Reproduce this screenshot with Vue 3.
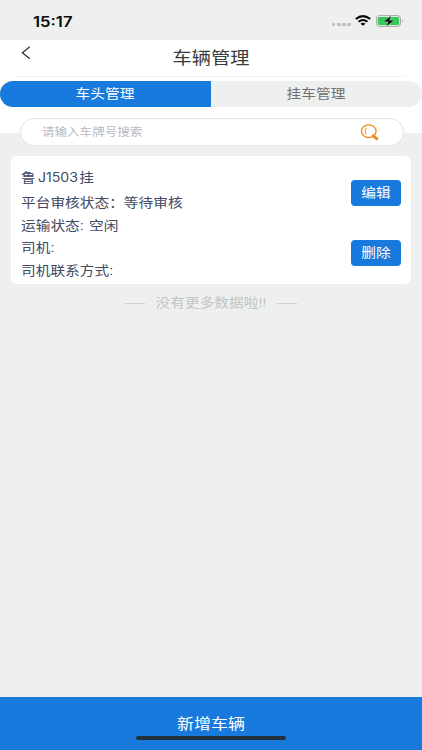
<script setup>
import { ref } from 'vue'

const tabs = ['车头管理', '挂车管理']
const active = ref(0)
const keyword = ref('')

const vehicles = ref([
  {
    prefix: '鲁',
    plate: 'J1503',
    suffix: '挂',
    audit: '等待审核',
    transport: '空闲',
    driver: '',
    phone: '',
  },
])
</script>

<template>
  <div class="page">
    <div class="status-bar">
      <span class="time wide">15:17</span>
      <div class="status-icons">
        <div class="signal"><i v-for="n in 4" :key="n" /></div>
        <svg class="wifi" width="16" height="11" viewBox="0 0 16 11">
          <g fill="none" stroke="#080808" stroke-width="2">
            <path d="M0.8 4 Q8 -1.8 15.2 4" />
            <path d="M3.5 6.8 Q8 3.1 12.5 6.8" />
          </g>
          <path d="M5.5 8.7 Q8 6.8 10.5 8.7 L8 10.8 Z" fill="#080808" />
        </svg>
        <svg class="battery" width="28" height="12" viewBox="0 0 28 12">
          <rect x="0.5" y="0.6" width="24" height="10.8" rx="2.8" fill="#e9f1ea" stroke="#a3a8a4" />
          <rect x="1.8" y="1.9" width="21.4" height="8.2" rx="1.6" fill="#35c759" />
          <path d="M26 4.2 Q27.6 6 26 7.8 Z" fill="#8e9390" />
          <path d="M15.2 0.4 L7.4 6.8 H12 L10 11.8 L18.4 5.2 H13.6 Z" fill="#080808" stroke="#d9f2df" stroke-width="0.4" />
        </svg>
      </div>
    </div>

    <div class="head">
      <header class="nav">
        <svg class="back" width="10" height="14" viewBox="0 0 10 14">
          <path d="M8.8 0.8 L1.4 6.8 L8.8 12.8" fill="none" stroke="#333" stroke-width="1.3" />
        </svg>
        <h1 class="title"><span class="wide">车辆管理</span></h1>
      </header>
      <div class="tabs">
        <div
          v-for="(tab, i) in tabs"
          :key="tab"
          class="tab"
          :class="{ active: active === i }"
          @click="active = i"
        >
          <span class="wide">{{ tab }}</span>
        </div>
      </div>
    </div>

    <div class="search">
      <input v-model="keyword" class="wide" placeholder="请输入车牌号搜索" />
      <svg class="search-icon" width="19" height="17" viewBox="0 0 19 17">
        <g fill="none" stroke="#f08a1d">
          <ellipse cx="8.8" cy="7.2" rx="7.3" ry="6.3" stroke-width="1.3" />
          <path d="M6.4 3.9 Q3.6 7 6.4 10.4" stroke-width="1" />
          <path d="M13.3 11.8 L16.9 14.8" stroke-width="2.9" stroke-linecap="round" />
        </g>
      </svg>
    </div>

    <div v-for="v in vehicles" :key="v.plate" class="card">
      <div class="info">
        <p class="plate wide">{{ v.prefix }}<b>{{ v.plate }}</b>{{ v.suffix }}</p>
        <p class="wide">平台审核状态：<span class="audit">{{ v.audit }}</span></p>
        <p class="wide">运输状态: <span class="transport">{{ v.transport }}</span></p>
        <p class="wide">司机: {{ v.driver }}</p>
        <p class="wide">司机联系方式: {{ v.phone }}</p>
      </div>
      <div class="actions">
        <button><span class="wide">编辑</span></button>
        <button><span class="wide">删除</span></button>
      </div>
    </div>

    <div class="no-more">
      <i class="dash" />
      <span class="wide">没有更多数据啦!!</span>
      <i class="dash" />
    </div>

    <footer class="add">
      <span class="wide">新增车辆</span>
      <div class="home-bar" />
    </footer>
  </div>
</template>

<style>
body {
  margin: 0;
}
</style>

<style scoped>
.page {
  width: 422px;
  height: 750px;
  display: flex;
  flex-direction: column;
  overflow: hidden;
  background: linear-gradient(#eef0ef 40px, #fff 40px, #fff 133px, #eef0ef 133px);
  font-family: "Liberation Sans", "Noto Sans CJK SC", sans-serif;
  color: #444a64;
}
/* text is drawn slightly expanded */
.wide {
  display: inline-block;
  transform: scaleX(1.13);
  white-space: nowrap;
}
.status-bar {
  height: 40px;
  flex: none;
  display: flex;
  justify-content: space-between;
  box-sizing: border-box;
  padding: 12px 18px 0 33px;
}
.time {
  font: 600 14px/19px Inter, sans-serif;
  color: #0a0a0a;
  transform: scaleX(1.19);
  transform-origin: left;
}
.status-icons {
  display: flex;
  align-items: flex-start;
}
.signal {
  display: flex;
  gap: 1.6px;
  margin: 10.5px 4px 0 0;
}
.signal i {
  width: 3.6px;
  height: 3px;
  border-radius: 1px;
  background: #bfc1c0;
}
.wifi {
  margin: 3px 5px 0 0;
}
.battery {
  margin-top: 3px;
}
.head {
  flex: none;
}
.nav {
  height: 36px;
  margin: 0 16px;
  border-bottom: 1px solid #f3f3f3;
  display: grid;
  grid-template-columns: 20px 1fr 20px;
}
.back {
  margin: 6px 0 0 5px;
}
.title {
  margin: 0;
  font-size: 17px;
  line-height: 38px;
  font-weight: 400;
  color: #3c3c3c;
  text-align: center;
}
.tabs {
  height: 26px;
  margin-top: 4px;
  display: flex;
  overflow: hidden;
  border-radius: 13px;
  background: #eef0ef;
}
.tab {
  flex: 1;
  font-size: 13px;
  line-height: 26px;
  text-align: center;
  color: #707070;
}
.tab.active {
  background: #177adc;
  color: #fff;
}
.search {
  flex: none;
  height: 28px;
  margin: 11px 18px 0 20px;
  padding: 0 24px 0 21px;
  box-sizing: border-box;
  display: flex;
  align-items: center;
  justify-content: space-between;
  border: 1px solid #e2e3e3;
  border-radius: 14px;
  background: #fff;
}
.search input {
  width: 240px;
  padding: 0;
  border: 0;
  outline: 0;
  background: none;
  font-family: inherit;
  font-size: 11px;
  transform: scaleX(1.14);
  transform-origin: left;
}
.search input::placeholder {
  color: #b9babd;
}
.card {
  flex: none;
  height: 128px;
  margin: 10px 11px 0;
  padding: 0 10px;
  box-sizing: border-box;
  display: flex;
  justify-content: space-between;
  border-radius: 5px;
  background: #fff;
}
.info {
  display: flex;
  flex-direction: column;
  align-items: flex-start;
  padding-top: 10.5px;
}
.info p {
  margin: 0;
  font-size: 13px;
  line-height: 22.6px;
  transform-origin: left;
}
.info .plate {
  margin-bottom: 3px;
}
.plate b {
  font-family: Inter, sans-serif;
  font-size: 12.5px;
  line-height: 1;
  font-weight: 400;
  margin: 0 1px 0 2px;
}
.transport {
  margin-left: 1px;
}
.actions {
  display: flex;
  flex-direction: column;
  gap: 34px;
  padding-top: 24px;
}
.actions button {
  width: 50px;
  height: 26px;
  padding: 0 0 1px;
  border: 0;
  border-radius: 4px;
  background: #177adc;
  color: #fff;
  font-family: inherit;
  font-size: 13px;
  line-height: 22px;
}
.no-more {
  display: flex;
  align-items: center;
  justify-content: center;
  gap: 17px;
  margin-top: 9px;
  font-size: 13px;
  line-height: 20px;
  color: #c3c4c4;
}
.dash {
  width: 20px;
  height: 1px;
  background: #cfd0d0;
}
.add {
  flex: none;
  height: 53px;
  margin-top: auto;
  display: flex;
  flex-direction: column;
  align-items: center;
  background: #177adc;
  color: #fff;
  font-size: 15px;
  line-height: 22px;
}
.add .wide {
  margin-top: 16px;
}
.home-bar {
  width: 150px;
  height: 4px;
  margin-top: 1px;
  border-radius: 2px;
  background: #24303c;
}
</style>
